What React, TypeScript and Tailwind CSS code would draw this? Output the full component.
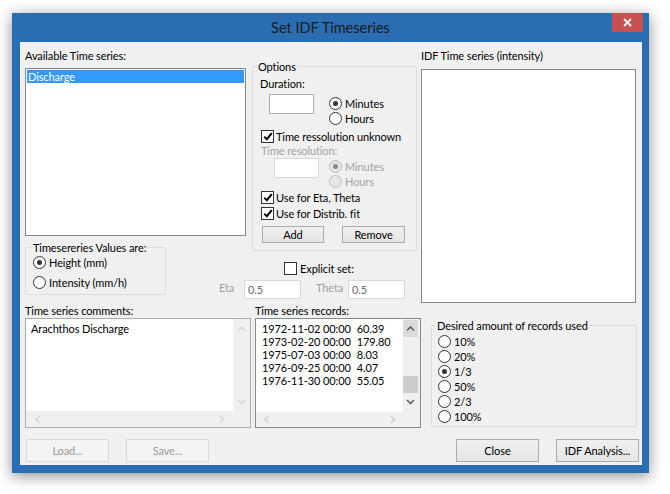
import type { ReactNode } from 'react';

// Win8 style controls
function Radio({ checked = false, disabled = false }: { checked?: boolean; disabled?: boolean }) {
  return (
    <span
      className={`flex h-[13px] w-[13px] shrink-0 items-center justify-center rounded-full border ${
        disabled ? 'border-[#bcbcbc] bg-[#e6e6e6]' : 'border-[#333] bg-white'
      }`}
    >
      {checked && <span className={`h-[5px] w-[5px] rounded-full ${disabled ? 'bg-[#8a8a8a]' : 'bg-[#333]'}`} />}
    </span>
  );
}

function RadioRow({ label, checked, disabled, className = '' }: { label: string; checked?: boolean; disabled?: boolean; className?: string }) {
  return (
    <div className={`flex h-[15px] items-center gap-[3px] ${className}`}>
      <Radio checked={checked} disabled={disabled} />
      <span className={disabled ? 'text-[#a3a3a3]' : 'text-black'}>{label}</span>
    </div>
  );
}

function Check({ checked = false }: { checked?: boolean }) {
  return (
    <span className="flex h-[13px] w-[13px] shrink-0 items-center justify-center border border-[#333] bg-white">
      {checked && (
        <svg width="10" height="9" viewBox="0 0 10 9">
          <polyline points="1.2,4.6 3.8,7.2 8.8,1.2" fill="none" stroke="#000" strokeWidth="2" />
        </svg>
      )}
    </span>
  );
}

function CheckRow({ label, checked, className = '' }: { label: string; checked?: boolean; className?: string }) {
  return (
    <div className={`flex h-[16px] items-center gap-[2px] whitespace-nowrap ${className}`}>
      <Check checked={checked} />
      <span>{label}</span>
    </div>
  );
}

function Button({ children, disabled = false, className = '' }: { children: ReactNode; disabled?: boolean; className?: string }) {
  return (
    <div
      className={`flex items-center justify-center border ${
        disabled
          ? 'border-[#d9d9d9] bg-[#f4f4f4] text-[#9b9b9b]'
          : 'border-[#acacac] bg-gradient-to-b from-[#f0f0f0] to-[#e5e5e5] text-black'
      } ${className}`}
    >
      {children}
    </div>
  );
}

function GroupBox({ legend, className = '', legendClass = 'ml-[4px]', children }: { legend: string; className?: string; legendClass?: string; children: ReactNode }) {
  return (
    <fieldset className={`rounded-[2px] border border-[#dcdcdc] p-0 ${className}`}>
      <legend className={`h-[15px] px-[1px] leading-[15px] ${legendClass}`}>{legend}</legend>
      {children}
    </fieldset>
  );
}

function Chevron({ dir, color }: { dir: 'up' | 'down' | 'left' | 'right'; color: string }) {
  const pts = {
    up: '1,5.5 4.5,2 8,5.5',
    down: '1,2 4.5,5.5 8,2',
    left: '5.5,1 2,4.5 5.5,8',
    right: '2,1 5.5,4.5 2,8',
  }[dir];
  const w = dir === 'up' || dir === 'down' ? 9 : 7;
  const h = dir === 'up' || dir === 'down' ? 7 : 9;
  return (
    <svg width={w} height={h} viewBox={`0 0 ${w} ${h}`}>
      <polyline points={pts} fill="none" stroke={color} strokeWidth="1.6" />
    </svg>
  );
}

const records = [
  ['1972-11-02 00:00', '60.39'],
  ['1973-02-20 00:00', '179.80'],
  ['1975-07-03 00:00', '8.03'],
  ['1976-09-25 00:00', '4.07'],
  ['1976-11-30 00:00', '55.05'],
];

const amounts = ['10%', '20%', '1/3', '50%', '2/3', '100%'];

export default function App() {
  return (
    <div className="h-[494px] w-[670px] overflow-hidden bg-white pt-[13px] pl-[12px] font-['Lato','Liberation_Sans',sans-serif] text-[11px] leading-[15px] tracking-[-0.1px] text-black">
      {/* window frame */}
      <div className="flex h-[460px] w-[637px] flex-col bg-[#2b6db2] shadow-[0_3px_14px_rgba(0,0,0,0.45)]">
        {/* title bar */}
        <div className="grid h-[29px] grid-cols-[1fr_auto_1fr]">
          <div />
          <div className="flex items-center text-[14.5px] tracking-normal text-[#1c1c1c]">Set IDF Timeseries</div>
          <div className="flex justify-end">
            <div className="mr-[6px] flex h-[19px] w-[31px] items-center justify-center bg-[#c75050]">
              <svg width="9" height="9" viewBox="0 0 9 9">
                <path d="M1 1 L8 8 M8 1 L1 8" stroke="#fff" strokeWidth="1.8" />
              </svg>
            </div>
          </div>
        </div>

        {/* client area */}
        <div className="ml-[8px] mr-[7px] h-[423px] bg-[#f0f0f0] pl-[5px]">
          {/* top part */}
          <div className="grid grid-cols-[194px_33px_169px_216px] grid-rows-[196px_15px_50px]">
            {/* available series */}
            <div className="col-span-2 col-start-1 row-start-1 pt-[6px]">
              <div className="h-[15px]">Available Time series:</div>
              <div className="mt-[5px] h-[168px] w-[221px] border border-[#828790] bg-white p-[1px]">
                <div className="h-[13px] bg-[#3399ff] pl-[1px] leading-[13px] text-white">Discharge</div>
              </div>
            </div>

            {/* options */}
            <div className="col-start-3 row-span-2 row-start-1">
              <GroupBox legend="Options" className="mt-[17px] h-[192px] w-[165px]">
                <div className="mt-[2px] ml-[7px] h-[15px]">Duration:</div>
                <div className="mt-[3px] flex">
                  <div className="ml-[16px] h-[20px] w-[45px] border border-[#abadb3] bg-white" />
                  <div className="mt-[2px] ml-[15px]">
                    <RadioRow label="Minutes" checked />
                    <RadioRow label="Hours" />
                  </div>
                </div>
                <CheckRow label="Time ressolution unknown" checked className="mt-[2px] ml-[8px]" />
                <div className="ml-[8px] h-[14px] leading-[14px] text-[#a3a3a3]">Time resolution:</div>
                <div className="flex">
                  <div className="ml-[21px] h-[20px] w-[45px] border border-[#d9d9d9] bg-white" />
                  <div className="mt-[1px] ml-[10px]">
                    <RadioRow label="Minutes" checked disabled />
                    <RadioRow label="Hours" disabled />
                  </div>
                </div>
                <CheckRow label="Use for Eta, Theta" checked className="ml-[8px]" />
                <CheckRow label="Use for Distrib. fit" checked className="ml-[8px]" />
                <div className="mt-[5px] flex">
                  <Button className="ml-[9px] h-[17px] w-[62px]">Add</Button>
                  <Button className="ml-[18px] h-[17px] w-[63px]">Remove</Button>
                </div>
              </GroupBox>
            </div>

            {/* IDF list */}
            <div className="col-start-4 row-span-3 row-start-1 pt-[6px]">
              <div className="h-[15px]">IDF Time series (intensity)</div>
              <div className="mt-[6px] h-[234px] w-[215px] border border-[#828790] bg-white" />
            </div>

            {/* values group */}
            <div className="col-start-1 row-span-2 row-start-2">
              <GroupBox legend="Timesereries Values are:" legendClass="ml-[6px]" className="mt-[2px] h-[55px] w-[141px]">
                <RadioRow label="Height (mm)" checked className="ml-[7px]" />
                <RadioRow label="Intensity (mm/h)" className="mt-[5px] ml-[7px]" />
              </GroupBox>
            </div>

            {/* explicit set */}
            <div className="col-span-2 col-start-2 row-start-3">
              <div className="mt-[8px] ml-[65px] flex h-[15px] items-center gap-[3px]">
                <Check />
                <span>Explicit set:</span>
              </div>
              <div className="mt-[4px] flex items-start">
                <span className="w-[25px] text-[#a0a0a0]">Eta</span>
                <div className="flex h-[19px] w-[57px] items-center border border-[#d9d9d9] bg-white pl-[3px] text-[#6d6d6d]">0.5</div>
                <span className="ml-[15px] w-[32px] text-[#a0a0a0]">Theta</span>
                <div className="flex h-[19px] w-[57px] items-center border border-[#d9d9d9] bg-white pl-[3px] text-[#6d6d6d]">0.5</div>
              </div>
            </div>
          </div>

          {/* bottom part */}
          <div className="flex">
            {/* comments */}
            <div className="w-[226px]">
              <div className="h-[15px]">Time series comments:</div>
              <div className="grid h-[110px] grid-cols-[1fr_17px] grid-rows-[1fr_16px] border border-[#abadb3] bg-white">
                <div className="pt-[2px] pl-[5px]">Arachthos Discharge</div>
                <div className="flex flex-col items-center justify-between bg-[#f0f0f0] py-[6px]">
                  <Chevron dir="up" color="#d6d6d6" />
                  <Chevron dir="down" color="#d6d6d6" />
                </div>
                <div className="flex items-center justify-between bg-[#f0f0f0] px-[8px]">
                  <Chevron dir="left" color="#d6d6d6" />
                  <Chevron dir="right" color="#d6d6d6" />
                </div>
                <div className="bg-[#f0f0f0]" />
              </div>
            </div>

            {/* records */}
            <div className="ml-[4px] w-[166px]">
              <div className="h-[15px]">Time series records:</div>
              <div className="grid h-[110px] grid-cols-[1fr_17px] grid-rows-[93px_15px] overflow-hidden border border-[#828790] bg-white">
                <div className="overflow-hidden pt-[3px] pl-[6px] leading-[13px] whitespace-nowrap">
                  {records.map(([d, v]) => (
                    <div key={d} className="flex gap-[6px]">
                      <span className="shrink-0">{d}</span>
                      <span>{v}</span>
                    </div>
                  ))}
                </div>
                <div className="flex flex-col bg-[#f0f0f0] pt-[1px]">
                  <div className="flex h-[17px] w-[15px] items-center justify-center bg-[#dadada]">
                    <Chevron dir="up" color="#606060" />
                  </div>
                  <div className="mt-[39px] h-[17px] w-[15px] bg-[#cdcdcd]" />
                  <div className="flex h-[17px] w-[15px] items-center justify-center">
                    <Chevron dir="down" color="#606060" />
                  </div>
                </div>
                <div className="flex items-center justify-between bg-[#f0f0f0] px-[7px]">
                  <Chevron dir="left" color="#d0d0d0" />
                  <Chevron dir="right" color="#d0d0d0" />
                </div>
                <div className="bg-[#f0f0f0]" />
              </div>
            </div>

            {/* desired amount */}
            <GroupBox legend="Desired amount of records used" className="mt-[15px] ml-[10px] h-[109px] w-[206px]">
              <div className="mt-[1px] ml-[6px]">
                {amounts.map((a) => (
                  <RadioRow key={a} label={a} checked={a === '1/3'} />
                ))}
              </div>
            </GroupBox>
          </div>

          {/* buttons */}
          <div className="mt-[11px] flex">
            <Button disabled className="ml-[1px] h-[23px] w-[83px]">Load...</Button>
            <Button disabled className="ml-[17px] h-[23px] w-[83px]">Save...</Button>
            <Button className="ml-[247px] h-[23px] w-[83px]">Close</Button>
            <Button className="ml-[17px] h-[23px] w-[83px]">IDF Analysis...</Button>
          </div>
        </div>
      </div>
    </div>
  );
}
